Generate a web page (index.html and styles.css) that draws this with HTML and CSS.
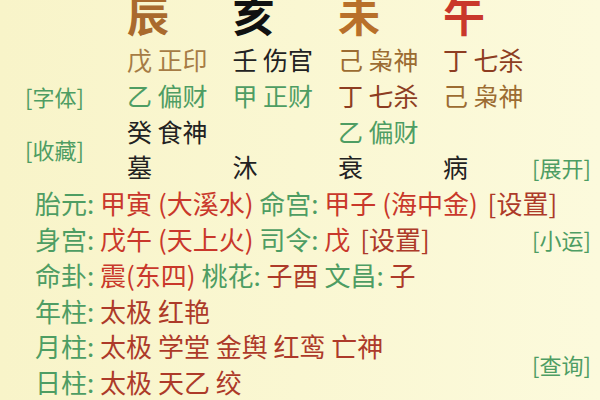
FILE: index.html
```html
<!DOCTYPE html>
<html lang="zh-CN">
<head>
<meta charset="utf-8">
<link rel="stylesheet" href="styles.css">
</head>
<body>
<div class="sheet">
  <div class="big c1 r1 earth">辰</div>
  <div class="big c2 r1 black">亥</div>
  <div class="big c3 r1 orange">未</div>
  <div class="big c4 r1 red">午</div>

  <div class="cell c1 r2 tan">戊 正印</div>
  <div class="cell c2 r2 ink">壬 伤官</div>
  <div class="cell c3 r2 olive">己 枭神</div>
  <div class="cell c4 r2 rust">丁 七杀</div>

  <div class="side left r3">[字体]</div>
  <div class="cell c1 r3 green">乙 偏财</div>
  <div class="cell c2 r3 green">甲 正财</div>
  <div class="cell c3 r3 rust">丁 七杀</div>
  <div class="cell c4 r3 olive">己 枭神</div>

  <div class="side left r45">[收藏]</div>
  <div class="cell c1 r4 ink">癸 食神</div>
  <div class="cell c3 r4 green">乙 偏财</div>

  <div class="cell c1 r5 ink">墓</div>
  <div class="cell c2 r5 ink">沐</div>
  <div class="cell c3 r5 ink">衰</div>
  <div class="cell c4 r5 ink">病</div>
  <div class="side right r5">[展开]</div>

  <div class="line r6"><span class="green">胎元:</span> <span class="red">甲寅 (大溪水)</span> <span class="green">命宫:</span> <span class="red">甲子 (海中金)</span> <span class="dred set">[设置]</span></div>
  <div class="line r7"><span class="green">身宫:</span> <span class="red">戊午 (天上火)</span> <span class="green">司令:</span> <span class="red">戊</span> <span class="dred set">[设置]</span></div>
  <div class="side right r7">[小运]</div>
  <div class="line r8"><span class="green">命卦:</span> <span class="red">震(东四)</span> <span class="green">桃花:</span> <span class="dred">子酉</span> <span class="green">文昌:</span> <span class="dred">子</span></div>
  <div class="line r9"><span class="green">年柱:</span> <span class="dred">太极 红艳</span></div>
  <div class="line r10"><span class="green">月柱:</span> <span class="dred">太极 学堂 金舆 红鸾 亡神</span></div>
  <div class="side right r1011">[查询]</div>
  <div class="line r11"><span class="green">日柱:</span> <span class="dred">太极 天乙 绞</span></div>
</div>
</body>
</html>
```

FILE: styles.css
```css
html, body {
  margin: 0;
  padding: 0;
}
body {
  width: 600px;
  height: 400px;
  overflow: hidden;
  background: linear-gradient(90deg, #f8f4c9 0%, #faf7d2 50%, #fcfadc 100%);
  font-family: "Noto Sans CJK SC", "Noto Sans", sans-serif;
}
.sheet {
  display: grid;
  grid-template-columns: 127px 105.5px 105.5px 105px 89px 1fr;
  grid-template-rows: 42px repeat(10, 35.8px);
  white-space: nowrap;
}
.big {
  font-size: 42px;
  font-weight: 700;
  line-height: 28px;
  align-self: start;
}
.cell {
  font-size: 25px;
  line-height: 35.8px;
}
.line {
  grid-column: 1 / -1;
  padding-left: 35px;
  font-size: 26px;
  line-height: 35.8px;
}
.set { margin-left: 4px; }
.side {
  font-size: 22px;
  color: #4e9d63;
  align-self: center;
}
.left { grid-column: 1; padding-left: 25px; }
.right { grid-column: 6; }

.c1 { grid-column: 2; }
.c2 { grid-column: 3; }
.c3 { grid-column: 4; }
.c4 { grid-column: 5; }

.r1 { grid-row: 1; }
.r2 { grid-row: 2; }
.r3 { grid-row: 3; }
.r4 { grid-row: 4; }
.r5 { grid-row: 5; }
.r45 { grid-row: 4 / 6; }
.r6 { grid-row: 6; }
.r7 { grid-row: 7; }
.r8 { grid-row: 8; }
.r9 { grid-row: 9; }
.r10 { grid-row: 10; }
.r11 { grid-row: 11; }
.r1011 { grid-row: 10 / 12; }

.earth { color: #a96a2d; }
.black { color: #111; }
.orange { color: #b8702a; }
.red { color: #c9382b; }
.dred { color: #ad3a29; }
.tan { color: #a67c45; }
.ink { color: #222; }
.olive { color: #9c6c32; }
.rust { color: #8d3d22; }
.green { color: #4e9d63; }
```
